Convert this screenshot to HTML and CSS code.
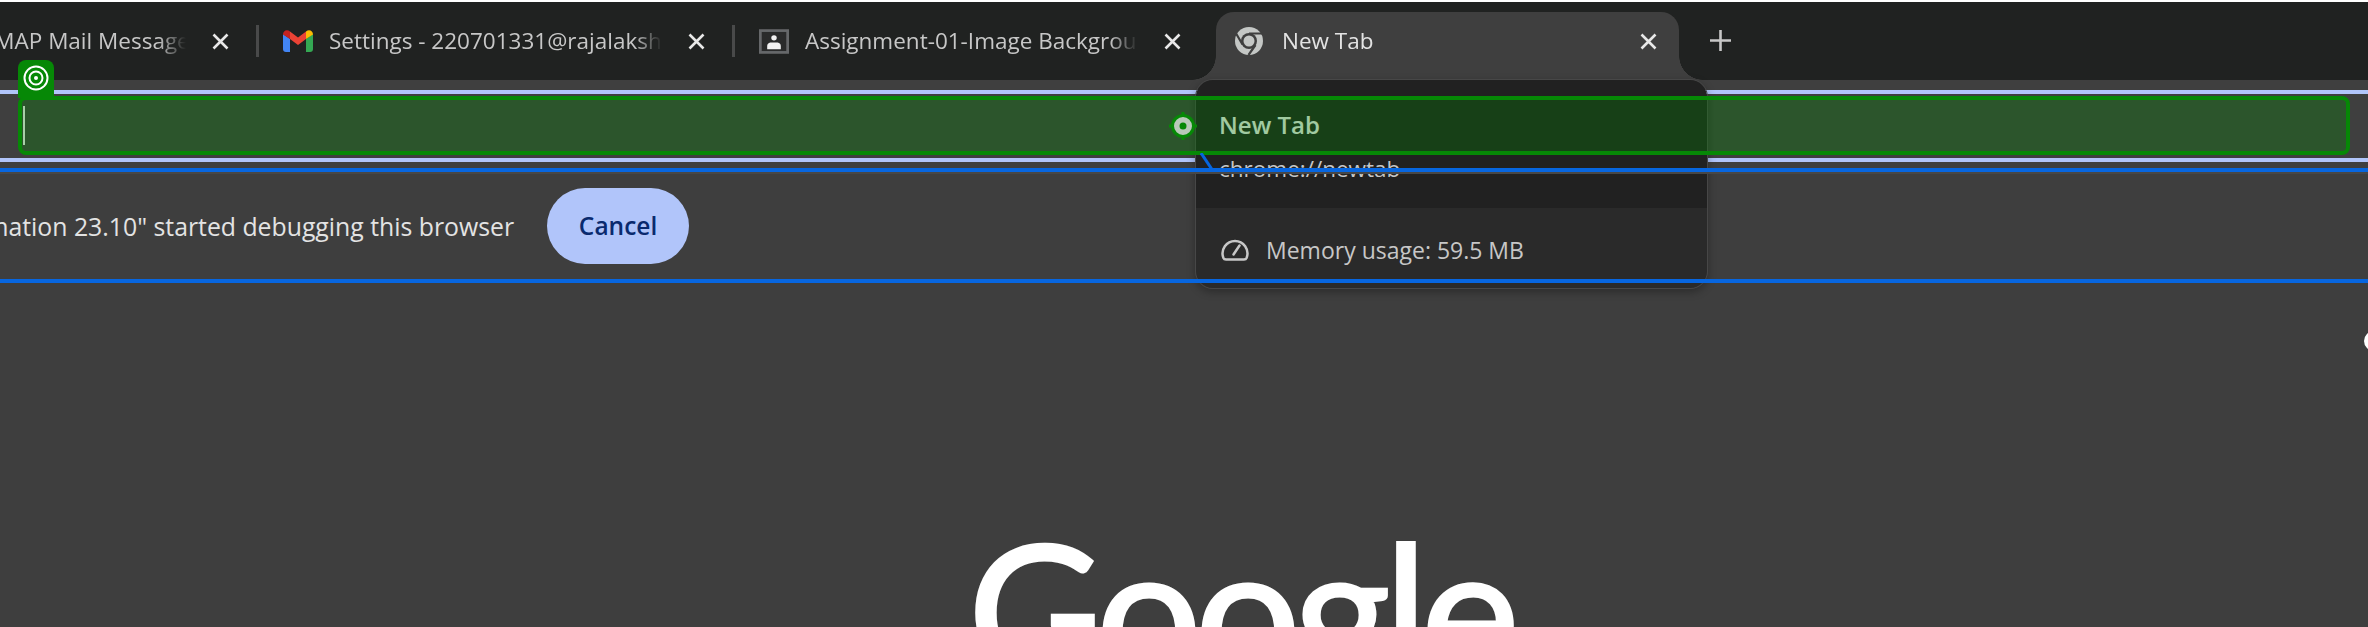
FILE: index.html
```html
<!DOCTYPE html>
<html lang="en">

<head>
    <meta charset="UTF-8">
    <title>New Tab</title>
    <link rel="stylesheet" href="styles.css">
</head>

<body>
    <div class="tabstrip">
        <div class="tab tab-first">
            <span class="tab-icon"></span>
            <span class="tab-title title-clipped">IMAP Mail Message</span>
            <svg class="tab-close" viewBox="0 0 17 17"><path d="M1.5 1.5l14 14M15.5 1.5l-14 14"/></svg>
        </div>
        <div class="tab">
            <span class="tab-icon">
                <svg width="30" height="22" viewBox="0 0 30 22">
                    <path fill="#4285f4" d="M0 4v15a3 3 0 0 0 3 3h4V9z"/>
                    <path fill="#34a853" d="M30 4v15a3 3 0 0 1-3 3h-4V9z"/>
                    <path fill="#ea4335" d="M7 9V1.5l8 6 8-6V9l-8 6z"/>
                    <path fill="#c5221f" d="M0 4.5C0 .8 4-1 7 1.5V9z"/>
                    <path fill="#fbbc04" d="M30 4.5C30 .8 26-1 23 1.5V9z"/>
                </svg>
            </span>
            <span class="tab-title">Settings - 220701331@rajalakshmi.edu.in</span>
            <svg class="tab-close" viewBox="0 0 17 17"><path d="M1.5 1.5l14 14M15.5 1.5l-14 14"/></svg>
        </div>
        <div class="tab tab-last">
            <span class="tab-icon">
                <svg width="33" height="27" viewBox="0 0 33 27">
                    <rect x="1.5" y="1.5" width="30" height="24" fill="#2a2b2b" stroke="#66686a" stroke-width="3"/>
                    <circle cx="16.500" cy="9.500" r="3" fill="#f2f2f2"/>
                    <path fill="#f2f2f2" d="M9 22v-3.500q0-3.500 3.500-4h8q3.500.5 3.500 4V22z"/>
                </svg>
            </span>
            <span class="tab-title">Assignment-01-Image Background Removal</span>
            <svg class="tab-close" viewBox="0 0 17 17"><path d="M1.5 1.5l14 14M15.500 1.5l-14 14"/></svg>
        </div>
        <div class="tab-active">
            <span class="tab-icon">
                <svg width="28" height="28" viewBox="0 0 28 28">
                    <circle cx="14" cy="14" r="14" fill="#c4c7c5"/>
                    <circle cx="14" cy="14" r="8" fill="#3f3f3f"/>
                    <circle cx="14" cy="14" r="5.500" fill="#c4c7c5"/>
                    <path fill="none" stroke="#3f3f3f" stroke-width="2.200" d="M14 6.500h14M7.500 17.500L0.500 5.500M20.500 18L13.500 28"/>
                </svg>
            </span>
            <span class="tab-title active-title">New Tab</span>
            <svg class="tab-close" viewBox="0 0 17 17"><path d="M1.5 1.5l14 14M15.500 1.5l-14 14"/></svg>
        </div>
        <svg class="new-tab" viewBox="0 0 21 21"><path d="M10.500 0v21M0 10.500h21"/></svg>
    </div>

    <div class="toolbar">
        <div class="toolbar-inner">
            <div class="omnibox">
                <span class="caret"></span>
            </div>
        </div>
    </div>

    <div class="infobar">
        <span class="infobar-text">"Automation 23.10" started debugging this browser</span>
        <button class="cancel">Cancel</button>
    </div>

    <div class="content">
        <div class="logo">Google</div>
    </div>

    <!-- hover card -->
    <div class="hovercard">
        <div class="card-top">
            <div class="card-title">New Tab</div>
            <div class="card-url">chrome://newtab</div>
        </div>
        <div class="card-bottom">
            <svg width="28" height="22" viewBox="0 0 28 22">
                <path fill="none" stroke="#c7c7c7" stroke-width="2.500" d="M5 20.500h18a3 3 0 0 0 2.700-1.800A12.500 12.500 0 0 0 14 2 12.500 12.500 0 0 0 2.300 18.700 3 3 0 0 0 5 20.500z"/>
                <path fill="none" stroke="#c7c7c7" stroke-width="2.500" stroke-linecap="round" d="M12.500 15.500L18.500 6.500"/>
            </svg>
            <span>Memory usage: 59.5 MB</span>
        </div>
    </div>

    <!-- debugger overlays -->
    <div class="badge">
        <svg width="26" height="26" viewBox="0 0 26 26">
            <g fill="none" stroke="#fff" stroke-width="2">
                <circle cx="13" cy="13" r="11.500"/>
                <circle cx="13" cy="13" r="6.500"/>
            </g>
            <circle cx="13" cy="13" r="2" fill="#fff"/>
        </svg>
    </div>
    <svg class="pin" width="30" height="30" viewBox="0 0 30 30">
        <path stroke="#068806" stroke-width="3" d="M15 1v28M1 15h28"/>
        <circle cx="15" cy="15" r="10.500" fill="#b9c9b9" stroke="#068806" stroke-width="3"/>
        <circle cx="15" cy="15" r="3.500" fill="#068806"/>
    </svg>
    <svg class="connector" width="14" height="20" viewBox="0 0 14 20">
        <path stroke="#0766e0" stroke-width="3" d="M1 0l12 18"/>
    </svg>
    <div class="edge-dot"></div>
</body>

</html>
```

FILE: styles.css
```css
* {
    margin: 0;
    padding: 0;
    box-sizing: border-box;
}

body {
    position: relative;
    width: 2368px;
    height: 627px;
    overflow: hidden;
    background-color: #3e3e3e;
    font-family: "Open Sans", "Noto Sans", sans-serif;
    font-size: 22.5px;
    color: #e3e3e3;
}

/* tab strip */
.tabstrip {
    display: flex;
    align-items: flex-start;
    height: 80px;
    background-color: #202221;
    border-top: 2px solid #fff;
}

.tab {
    display: flex;
    flex-shrink: 0;
    align-items: center;
    width: 476px;
    height: 32px;
    margin-top: 23px;
    padding-left: 24px;
    padding-right: 27px;
    border-right: 3px solid #494a4a;
}

.tab-first {
    margin-left: -217px;
}

.tab-last {
    border-right: none;
    padding-right: 30px;
}

.tab-active {
    position: relative;
    display: flex;
    flex-shrink: 0;
    align-items: center;
    width: 463px;
    height: 68px;
    margin-top: 10px;
    margin-left: 5px;
    padding: 0 22px 10px 18px;
    background-color: #3f3f3f;
    border-radius: 18px 18px 0 0;
}

.tab-active::before,
.tab-active::after {
    content: "";
    position: absolute;
    bottom: 0;
    width: 24px;
    height: 24px;
}

.tab-active::before {
    left: -24px;
    background: radial-gradient(circle at 0 0, transparent 23.5px, #3f3f3f 24px);
}

.tab-active::after {
    right: -24px;
    background: radial-gradient(circle at 100% 0, transparent 23.5px, #3f3f3f 24px);
}

.tab-icon {
    display: flex;
    flex-shrink: 0;
    justify-content: center;
    width: 30px;
    margin-right: 16px;
}

.tab-active .tab-icon {
    margin-right: 18px;
}

.tab-title {
    flex: 1;
    overflow: hidden;
    white-space: nowrap;
    line-height: 32px;
    color: #c7c7c7;
    -webkit-mask-image: linear-gradient(to right, #000 calc(100% - 28px), transparent);
    mask-image: linear-gradient(to right, #000 calc(100% - 28px), transparent);
}

.title-clipped {
    padding-left: 135px;
}

.active-title {
    color: #e3e3e3;
}

.tab-close {
    flex-shrink: 0;
    width: 17px;
    height: 17px;
    margin-left: 26px;
    fill: none;
    stroke: #e8e8e8;
    stroke-width: 2.6;
}

.new-tab {
    flex-shrink: 0;
    width: 21px;
    height: 21px;
    margin-top: 28px;
    margin-left: 31px;
    fill: none;
    stroke: #c7c7c7;
    stroke-width: 2.6;
}

/* toolbar */
.toolbar {
    height: 88px;
    padding-top: 10px;
    background-color: #3f3f3f;
}

.toolbar-inner {
    height: 72px;
    padding: 2px 18px 3px;
    border-top: 4px solid #b1c5fa;
    border-bottom: 4px solid #b1c5fa;
}

.omnibox {
    position: relative;
    z-index: 6;
    display: flex;
    align-items: center;
    height: 59px;
    padding-left: 1px;
    background-color: rgba(0, 143, 0, .29);
    border: 4px solid #068806;
    border-radius: 8px;
}

.caret {
    width: 2px;
    height: 39px;
    background-color: #a8cfa8;
}

/* infobar */
.infobar {
    position: relative;
    z-index: 7;
    display: flex;
    align-items: center;
    height: 115px;
    border-top: 4px solid #0766e0;
    border-bottom: 4px solid #0766e0;
    box-shadow: inset 0 2px #474747;
}

.infobar-text {
    flex-shrink: 0;
    margin-left: -79px;
    font-size: 24.8px;
    white-space: nowrap;
}

.cancel {
    flex-shrink: 0;
    width: 142px;
    height: 76px;
    margin-left: 33px;
    border: none;
    border-radius: 38px;
    background-color: #b1c5fa;
    font-family: inherit;
    font-size: 24.5px;
    font-weight: 600;
    color: #0a2a6e;
}

/* page content */
.content {
    padding-top: 232px;
    padding-left: 968px;
}

.logo {
    font-family: Lato, sans-serif;
    font-size: 186px;
    line-height: 186px;
    letter-spacing: -6.500px;
    color: #fff;
    -webkit-text-stroke: 3px #fff;
}

/* hover card */
.hovercard {
    position: absolute;
    z-index: 5;
    left: 1195px;
    top: 79px;
    width: 513px;
    height: 210px;
    overflow: hidden;
    border: 1px solid #474747;
    border-radius: 18px;
    box-shadow: 0 3px 8px rgba(0, 0, 0, .3);
}

.card-top {
    height: 128px;
    padding: 30px 23px 0;
    background-color: #212121;
}

.card-title {
    font-size: 24px;
    line-height: 30px;
    font-weight: 600;
    color: #e3e3e3;
}

.card-url {
    margin-top: 14px;
    line-height: 30px;
    color: #c7c7c7;
}

.card-bottom {
    display: flex;
    align-items: center;
    gap: 17px;
    height: 81px;
    padding: 2px 25px 0;
    background-color: #2a2a2a;
    font-size: 23px;
    color: #c7c7c7;
}

/* debugger overlays */
.badge {
    position: absolute;
    z-index: 8;
    left: 18px;
    top: 60px;
    display: flex;
    justify-content: center;
    padding-top: 5px;
    width: 36px;
    height: 38px;
    background-color: #068806;
    border-radius: 8px 8px 0 0;
}

.pin {
    position: absolute;
    z-index: 8;
    left: 1168px;
    top: 111px;
}

.connector {
    position: absolute;
    z-index: 8;
    left: 1200px;
    top: 153px;
}

.edge-dot {
    position: absolute;
    left: 2364px;
    top: 331px;
    width: 20px;
    height: 20px;
    border: 4px solid #fff;
    border-radius: 50%;
}
```
